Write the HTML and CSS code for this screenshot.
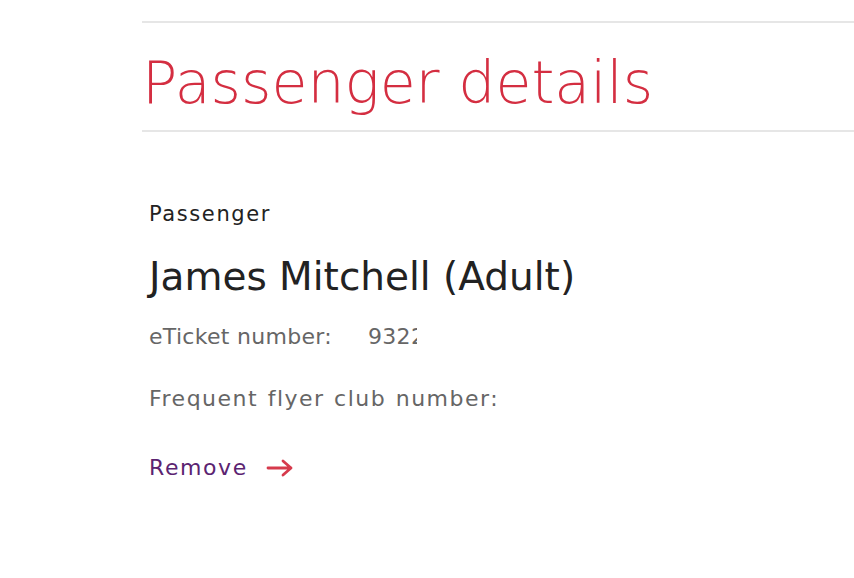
FILE: index.html
```html
<!DOCTYPE html>
<html lang="en">
<head>
  <meta charset="UTF-8" />
  <title>Passenger details</title>
  <link rel="stylesheet" href="styles.css">
</head>
<body>
  <main class="page">
    <h1 class="title">Passenger details</h1>

    <section class="passenger">
      <div class="label">Passenger</div>
      <div class="name">James Mitchell (Adult)</div>
      <div class="info ticket">eTicket number:<span class="value">9322 0456 7788</span></div>
      <div class="info flyer">Frequent flyer club number:</div>
      <a class="remove" href="#">Remove
        <svg class="arrow" width="28" height="20" viewBox="0 0 28 20">
          <path d="M2 10 H25 M17 3 L25 10 L17 17" fill="none" stroke="#d63a4c" stroke-width="2.8" stroke-linecap="round" stroke-linejoin="round" />
        </svg>
      </a>
    </section>
  </main>
</body>
</html>
```

FILE: styles.css
```css
body {
  margin: 0;
  background: #fff;
  font-family: 'DejaVu Sans', sans-serif;
  color: #222;
}
.page {
  padding: 21px 0 0 142px;
}
.title {
  margin: 0;
  height: 111px;
  box-sizing: border-box;
  padding-top: 31px;
  border-top: 2px solid #e6e6e6;
  border-bottom: 2px solid #e6e6e6;
  font-weight: 200;
  font-size: 58.5px;
  line-height: 1;
  color: #d42e41;
}
.passenger {
  padding: 71px 0 0 7px;
}
.label {
  font-size: 21px;
  line-height: 22px;
  letter-spacing: 1.6px;
  color: #222;
}
.name {
  margin-top: 32px;
  font-size: 39px;
  line-height: 39px;
  color: #222;
}
.info {
  font-size: 22px;
  line-height: 22px;
  letter-spacing: 0.3px;
  color: #666;
}
.ticket {
  margin-top: 30px;
  width: 268px;
  overflow: hidden;
  white-space: nowrap;
}
.value {
  margin-left: 36px;
}
.flyer {
  margin-top: 40px;
  letter-spacing: 1.5px;
  word-spacing: 1px;
}
.remove {
  display: flex;
  align-items: center;
  gap: 18px;
  margin-top: 47px;
  font-size: 22px;
  line-height: 21px;
  letter-spacing: 1.6px;
  color: #5b2371;
  text-decoration: none;
}
```
